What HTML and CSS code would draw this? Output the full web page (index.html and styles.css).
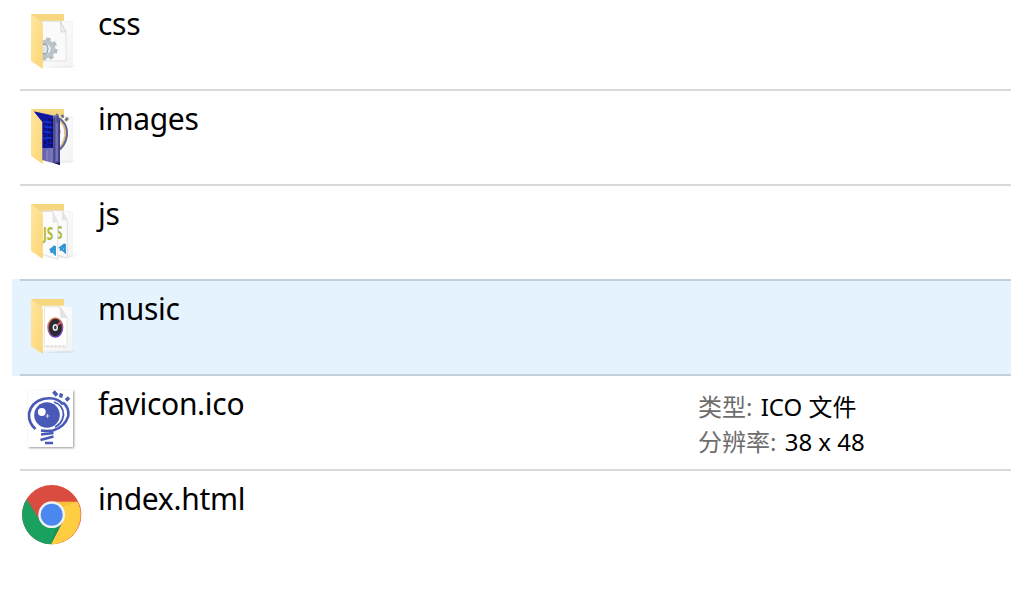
FILE: index.html
```
<!DOCTYPE html>
<html lang="zh-CN">
<head>
    <meta charset="UTF-8">
    <meta name="viewport" content="width=device-width, initial-scale=1.0">
    <title>Files</title>
    <link rel="stylesheet" href="styles.css">
</head>
<body>
    <!-- shared gradients and folder parts -->
    <svg class="defs" width="0" height="0">
        <defs>
            <linearGradient id="flap" x1="0" y1="0" x2="1" y2="1">
                <stop offset="0" stop-color="#ffe69f"/>
                <stop offset="1" stop-color="#fbd677"/>
            </linearGradient>
            <linearGradient id="sheet" x1="0" y1="0" x2="1" y2="1">
                <stop offset="0" stop-color="#ffffff"/>
                <stop offset="1" stop-color="#f4f4f5"/>
            </linearGradient>
            <linearGradient id="book" x1="0" y1="0" x2="1" y2="0">
                <stop offset="0" stop-color="#4a499a"/>
                <stop offset="0.7" stop-color="#7a78bb"/>
                <stop offset="1" stop-color="#3b3985"/>
            </linearGradient>
            <linearGradient id="ring" x1="0" y1="0" x2="0.3" y2="1">
                <stop offset="0" stop-color="#f08a4c"/>
                <stop offset="0.5" stop-color="#b76a70"/>
                <stop offset="1" stop-color="#6c3fc0"/>
            </linearGradient>
            <g id="folder-back">
                <path d="M45 57L56 57.500L50 60L24 60Z" fill="#000" opacity="0.06"/>
                <path d="M11 6H44V14H24L22 52L11 50Z" fill="#f6d67f"/>
                <path d="M22 13H44L52.300 14V58H22Z" fill="url(#sheet)" stroke="#ebebeb" stroke-width="0.600"/>
            </g>
            <path id="folder-flap" d="M11 6L21.500 14Q22.800 15 22.800 17.500V61L11 53Z" fill="url(#flap)"/>
        </defs>
    </svg>

    <div class="file-list">
        <div class="row">
            <div class="item">
                <svg class="icon" viewBox="0 0 64 64">
                    <use href="#folder-back"/>
                    <path d="M22 13.500H40.500L46 24V53H22Z" fill="#fafafa" stroke="#dedede" stroke-width="0.800"/>
                    <path d="M40.500 13.500L41 24H46Z" fill="#eee" stroke="#cfcfcf" stroke-width="0.700"/>
                    <circle cx="26" cy="41" r="7" fill="none" stroke="#bcc5cc" stroke-width="5"/>
                    <circle cx="26" cy="41" r="10" fill="none" stroke="#b4bec6" stroke-width="3.200" stroke-dasharray="4.200 3.650"/>
                    <ellipse cx="24.500" cy="41" rx="3.500" ry="4.800" fill="#dfe4e8" stroke="#8e989f" stroke-width="1.200"/>
                    <use href="#folder-flap"/>
                </svg>
                <div class="name">css</div>
            </div>
        </div>
        <div class="row">
            <div class="item">
                <svg class="icon" viewBox="0 0 64 64">
                    <use href="#folder-back"/>
                    <use href="#folder-flap"/>
                    <path d="M37 15Q47 20 46 33Q44 43 37 48" fill="none" stroke="#dcbd80" stroke-width="3.500"/>
                    <path d="M38 14.500Q48 20 47 32Q45.500 43 38 47.500" fill="none" stroke="#5d629c" stroke-width="1.900"/>
                    <path d="M38 24Q43 28 38 34" fill="none" stroke="#e8a3b0" stroke-width="1"/>
                    <path d="M36 11L38 14.500M41.500 11.500L43 15M48 14.500L45.500 18" stroke="#d9b878" stroke-width="3.500"/>
                    <path d="M36.500 11L38.500 14M42 12L43.300 14.500M47.500 15L45.700 17.500" stroke="#5566a8" stroke-width="2"/>
                    <path d="M14 8.500L37.500 13L40 17V62L22.300 57V19Z" fill="url(#book)"/>
                    <path d="M14 8.500L33 13V45H22.500V19Z" fill="#1016a0"/>
                    <path d="M25 18V44M29 16V42M32 16V44" stroke="#0b0d4c" stroke-width="1.500" stroke-dasharray="3 2"/>
                    <path d="M23 19H31M24 24H32M24 29H30M23 35H31" stroke="#1638dc" stroke-width="1.600"/>
                    <path d="M34 15V60" stroke="#383675" stroke-width="1.200"/>
                    <path d="M27 47V57M37 20V58" stroke="#8f91ca" stroke-width="1"/>
                    <path d="M34 60L40 62V59.500Z" fill="#111046"/>
                </svg>
                <div class="name">images</div>
            </div>
        </div>
        <div class="row">
            <div class="item">
                <svg class="icon" viewBox="0 0 64 64">
                    <use href="#folder-back"/>
                    <path d="M31 12.500H42L47.300 22V60L31 55Z" fill="#fbfbfb" stroke="#d8d8d8" stroke-width="0.800"/>
                    <path d="M42 12.500V22.500H47.300Z" fill="#e3e3e3"/>
                    <text transform="translate(36 41) scale(.65 1)" class="js-mark">S</text>
                    <path d="M45 46V54L40 49.500L45 46M40 52.500L45 48" fill="none" stroke="#2f93d5" stroke-width="1.900"/>
                    <path d="M22 13.500H32.500L37.800 24V61.500L22 56Z" fill="#fcfcfc" stroke="#dadada" stroke-width="0.800"/>
                    <path d="M32.500 13.500V24.500H37.800Z" fill="#e6e6e6"/>
                    <text transform="translate(23 42) scale(.65 1)" class="js-mark">JS</text>
                    <path d="M35 48V56L30.500 51.500L35 48M30.500 54.500L35 50" fill="none" stroke="#2f93d5" stroke-width="1.900"/>
                    <use href="#folder-flap"/>
                </svg>
                <div class="name">js</div>
            </div>
        </div>
        <div class="row selected">
            <div class="item">
                <svg class="icon" viewBox="0 0 64 64">
                    <use href="#folder-back"/>
                    <path d="M24.500 14H40L47 25V54H24.500Z" fill="#fff" stroke="#e2dfd5" stroke-width="0.800"/>
                    <path d="M40 14L41 24.500H47Z" fill="#e4e4e4" stroke="#d2d2d2" stroke-width="0.500"/>
                    <ellipse cx="35.300" cy="34.500" rx="7.300" ry="9.500" fill="#2c2930" stroke="url(#ring)" stroke-width="1.500"/>
                    <ellipse cx="35.300" cy="34.500" rx="2" ry="2.800" fill="#444" stroke="#eee" stroke-width="1.400"/>
                    <path d="M37.500 32L41 29" stroke="#e1596b" stroke-width="1.800"/>
                    <path d="M26 53H45" stroke="#c5c5c5" stroke-width="0.800" stroke-dasharray="3 1"/>
                    <use href="#folder-flap"/>
                </svg>
                <div class="name">music</div>
            </div>
        </div>
        <div class="row">
            <div class="item">
                <svg class="icon" viewBox="0 0 64 64">
                    <rect class="thumb" x="8" y="2" width="45" height="57" fill="#fff"/>
                    <circle cx="27" cy="27" r="12.800" fill="#4859b8"/>
                    <circle cx="21.800" cy="24" r="3.900" fill="#fff"/>
                    <path d="M27.500 26V30M25.500 28H29.500" stroke="#c8cdf0" stroke-width="1"/>
                    <path d="M15.500 41Q8.500 35 9 26Q11 14 24 10.800Q37 8.500 43 16.500" fill="none" stroke="#4859b8" stroke-width="2.600"/>
                    <path d="M43 14.500Q49.500 20 48.300 28Q45 39 33 42.500Q27 43.500 21 42.500" fill="none" stroke="#4859b8" stroke-width="2.600"/>
                    <path d="M34 14Q43.500 17 43.500 27Q42 36 35 39" fill="none" stroke="#4859b8" stroke-width="1.800"/>
                    <path d="M21 46.500L33.500 45M20.500 52L33.500 48.500M25 55H33" stroke="#4859b8" stroke-width="2.600"/>
                    <path d="M33.500 3.500L37 7.500M41.500 5.500L40.500 9.500M49 9.500L46 12.500" stroke="#4859b8" stroke-width="3.500"/>
                </svg>
                <div class="name">favicon.ico</div>
                <div class="details">
                    <div><span class="label">类型:</span> ICO 文件</div>
                    <div><span class="label">分辨率:</span> 38 x 48</div>
                </div>
            </div>
        </div>
        <div class="row last">
            <div class="item">
                <svg class="icon" viewBox="0 0 64 64">
                    <circle cx="31.700" cy="31.700" r="29.600" fill="#db4c40"/>
                    <path d="M31.700 18.700H57.700A29.600 29.600 0 0 1 31 61.300L43 38Z" fill="#ffcd42"/>
                    <path d="M6.600 16A29.600 29.600 0 0 0 31 61.300L43 38H20.400Z" fill="#1aa15f"/>
                    <path d="M31.700 18.700H57.700L42 24Z" fill="#e0a52e" opacity="0.300"/>
                    <path d="M43 38L31 61.300L36 43.500Z" fill="#0b6a3b" opacity="0.250"/>
                    <circle cx="31.700" cy="31.700" r="13.400" fill="#f1f1f1"/>
                    <circle cx="31.700" cy="31.700" r="11" fill="#4a88f0"/>
                </svg>
                <div class="name">index.html</div>
            </div>
        </div>
    </div>
</body>
</html>
```
FILE: styles.css
```
body {
    margin: 0;
    background-color: white;
    font-family: "Noto Sans", "Noto Sans CJK SC", sans-serif;
    color: black;
    overflow: hidden;
}

.defs {
    display: block;
}

.file-list {
    margin-top: -4px;
    padding-left: 12px;
}

.row {
    height: 95px;
    padding-left: 8px;
}

.item {
    display: flex;
    box-sizing: border-box;
    height: 95px;
    border-bottom: 2px solid #d9d9d9;
}

/* the selected row also tints the line above it */
.selected {
    height: 97px;
    margin-top: -2px;
    background-color: #e5f3ff;
}

.selected .item {
    height: 97px;
    border-top: 2px solid #c3d0db;
    border-bottom-color: #c3d0db;
}

.last .item {
    border-bottom: none;
}

.icon {
    width: 64px;
    height: 64px;
    margin-top: 12px;
    flex: none;
}

.name {
    width: 600px;
    margin-left: 14px;
    margin-top: 8px;
    font-size: 30px;
    line-height: 40px;
    letter-spacing: -0.3px;
}

.details {
    margin-top: 13px;
    font-size: 24px;
    line-height: 35px;
    white-space: nowrap;
}

.label {
    margin-right: 2px;
    color: #6d6d6d;
}

.js-mark {
    font-family: "Open Sans", sans-serif;
    font-size: 18px;
    font-weight: bold;
    fill: #b3b92f;
}

.thumb {
    filter: drop-shadow(1px 1px 1px rgba(0, 0, 0, 0.4));
}
```
